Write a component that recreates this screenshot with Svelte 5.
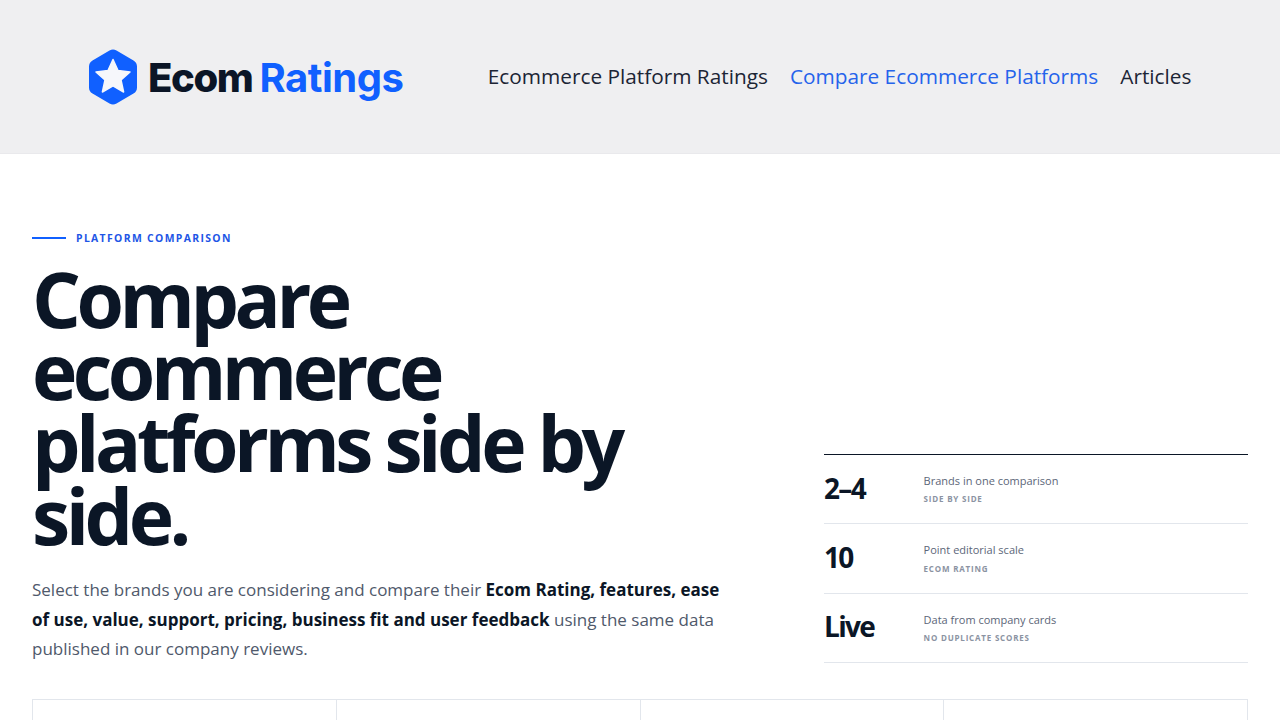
<script>
	const stats = [
		{ value: '2–4', label: 'Brands in one comparison', note: 'Side by side' },
		{ value: '10', label: 'Point editorial scale', note: 'Ecom Rating' },
		{ value: 'Live', label: 'Data from company cards', note: 'No duplicate scores' }
	];
</script>

<header>
	<a href="/" class="logo">
		<svg width="50" height="56" viewBox="0 0 50 56" aria-hidden="true">
			<path
				d="M21.5 1.6 a7 7 0 0 1 7 0 L45.5 11.4 a7 7 0 0 1 3.5 6 V38.6 a7 7 0 0 1 -3.5 6 L28.5 54.4 a7 7 0 0 1 -7 0 L4.5 44.6 a7 7 0 0 1 -3.5 -6 V17.4 a7 7 0 0 1 3.5 -6 Z"
				fill="#1060ff"
			/>
			<path
				d="M25 10.5 L30 21.6 L42 22.9 L33 31 L35.6 43 L25 36.9 L14.4 43 L17 31 L8 22.9 L20 21.6 Z"
				fill="#f6f7fb"
				stroke="#f6f7fb"
				stroke-width="1.5"
				stroke-linejoin="round"
			/>
		</svg>
		<span class="logo-text">Ecom<b>Ratings</b></span>
	</a>
	<nav>
		<a href="/ratings">Ecommerce Platform Ratings</a>
		<a href="/compare" class="active">Compare Ecommerce Platforms</a>
		<a href="/articles">Articles</a>
	</nav>
</header>

<main>
	<section class="hero">
		<div class="intro">
			<div class="eyebrow">Platform comparison</div>
			<h1>Compare ecommerce platforms side by side.</h1>
			<p>
				Select the brands you are considering and compare their
				<strong>Ecom Rating, features, ease of use, value, support, pricing, business fit and user feedback</strong>
				using the same data published in our company reviews.
			</p>
		</div>
		<div class="stats">
			{#each stats as stat}
				<div class="stat">
					<div class="value">{stat.value}</div>
					<div class="text">
						<div class="label">{stat.label}</div>
						<div class="note">{stat.note}</div>
					</div>
				</div>
			{/each}
		</div>
	</section>

	<div class="cards">
		<div class="card"></div>
		<div class="card"></div>
		<div class="card"></div>
		<div class="card"></div>
	</div>
</main>

<style>
	:global(html), :global(body) {
		height: 720px;
		overflow: hidden;
	}
	:global(body) {
		font-family: 'Open Sans', sans-serif;
		background: #fff;
	}
	a {
		text-decoration: none;
		color: inherit;
	}

	header {
		height: 153px;
		background: #efeff1;
		border-bottom: 1px solid #e9e9ec;
		display: flex;
		align-items: center;
		padding: 0 88.6px 0 88px;
		justify-content: space-between;
	}
	.logo {
		display: flex;
		align-items: center;
		gap: 10px;
		margin-top: 1px;
	}
	.logo-text {
		font-family: Inter, sans-serif;
		font-size: 40px;
		font-weight: 800;
		letter-spacing: -0.035em;
		color: #0b1526;
	}
	.logo-text b {
		margin-left: 7px;
		font-weight: 700;
		letter-spacing: -0.5px;
		color: #1060ff;
	}
	nav {
		display: flex;
		gap: 22px;
		font-size: 20.8px;
		margin-bottom: 1px;
		color: #1c2535;
	}
	nav .active {
		color: #2563eb;
	}

	main {
		padding: 0 32px;
	}
	.hero {
		display: grid;
		grid-template-columns: 728px 424px;
		gap: 64px;
		align-items: end;
		padding-top: 77px;
	}
	.eyebrow {
		display: flex;
		align-items: center;
		gap: 10px;
		font-size: 10.4px;
		font-weight: 700;
		letter-spacing: 0.13em;
		text-transform: uppercase;
		color: #1d55e6;
		line-height: 14px;
	}
	.eyebrow::before {
		content: '';
		width: 34px;
		height: 2px;
		background: #1060ff;
	}
	h1 {
		margin: 18px 0 0;
		max-width: 640px;
		font-size: 76.8px;
		line-height: 72.2px;
		font-weight: 700;
		letter-spacing: -4.5px;
		color: #0b1626;
	}
	p {
		margin: 23px 0 0;
		max-width: 700px;
		font-size: 17px;
		line-height: 29.75px;
		color: #4f596b;
	}
	strong {
		font-weight: 700;
		color: #0b1626;
	}

	.stats {
		border-top: 1px solid #0b1626;
		margin-bottom: 1px;
	}
	.stat {
		display: grid;
		grid-template-columns: 99.6px 1fr;
		align-items: center;
		box-sizing: border-box;
		height: 69.33px;
		border-bottom: 1px solid #e2e6ec;
	}
	.value {
		margin-bottom: 3px;
		font-size: 28px;
		font-weight: 700;
		letter-spacing: -0.06em;
		color: #0b1626;
	}
	.text {
		margin-bottom: 1px;
	}
	.label {
		font-size: 11px;
		line-height: 17px;
		color: #5c6678;
	}
	.note {
		margin-top: 3.4px;
		font-size: 8px;
		line-height: 13px;
		font-weight: 700;
		letter-spacing: 0.1em;
		text-transform: uppercase;
		color: #8b93a2;
	}

	.cards {
		margin-top: 35px;
		display: grid;
		grid-template-columns: repeat(4, 1fr);
		gap: 1px;
		background: #e2e6ec;
		border: 1px solid #e2e6ec;
		height: 120px;
	}
	.card {
		background: #fff;
	}
</style>
